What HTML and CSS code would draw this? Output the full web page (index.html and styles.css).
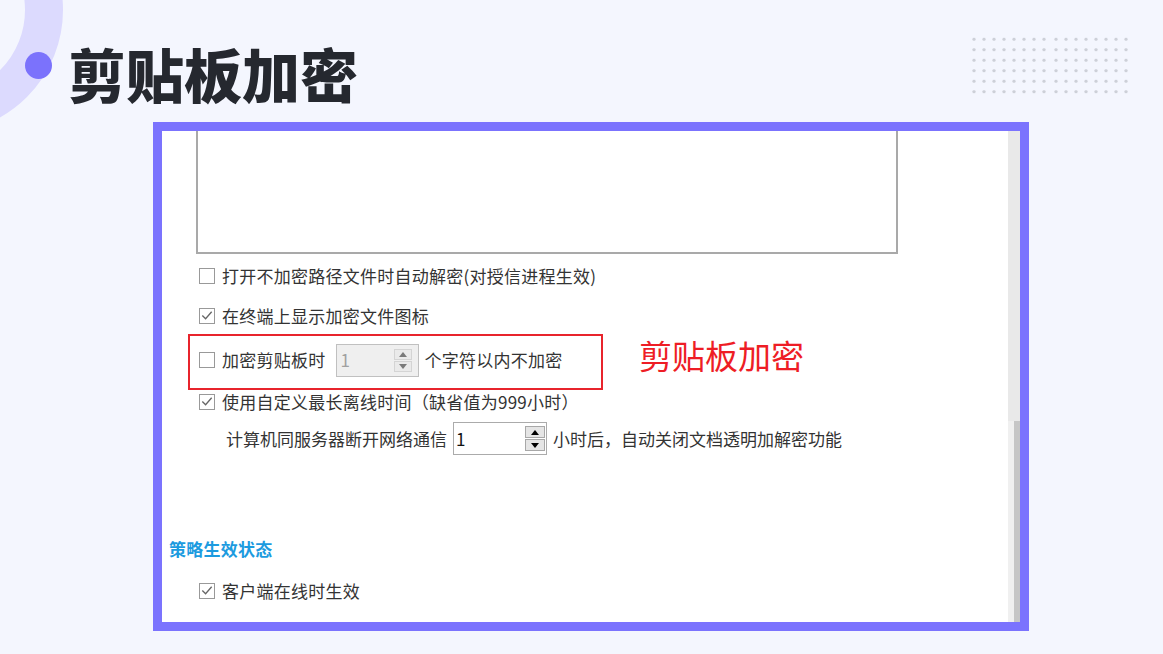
FILE: index.html
```html
<!DOCTYPE html>
<html lang="zh-CN">
<head>
    <meta charset="UTF-8">
    <meta name="viewport" content="width=device-width, initial-scale=1.0">
    <title>剪贴板加密</title>
    <link rel="stylesheet" href="styles.css">
</head>
<body>

<div class="slide">
    <div class="ring"></div>

    <header class="top">
        <div class="title-group">
            <span class="dot"></span>
            <h1>剪贴板加密</h1>
        </div>
        <div class="dots">
            <div class="dot-grid"></div>
            <div class="dot-grid"></div>
        </div>
    </header>

    <!-- screenshot of the policy dialog -->
    <div class="shot">
        <div class="shot-body">
            <div class="list-box"></div>

            <div class="row r1">
                <span class="cb"></span>
                <span>打开不加密路径文件时自动解密(对授信进程生效)</span>
            </div>

            <div class="row r2">
                <span class="cb"><svg viewBox="0 0 15 15"><path d="M2.5 7 L6 10.5 L12.5 3"/></svg></span>
                <span>在终端上显示加密文件图标</span>
            </div>

            <div class="hl-row">
                <div class="highlight">
                    <span class="cb"></span>
                    <span>加密剪贴板时</span>
                    <div class="spin off">
                        <span class="spin-val">1</span>
                        <div class="spin-btns"><span class="up"></span><span class="down"></span></div>
                    </div>
                    <span>个字符以内不加密</span>
                </div>
                <div class="note">剪贴板加密</div>
            </div>

            <div class="row r4">
                <span class="cb"><svg viewBox="0 0 15 15"><path d="M2.5 7 L6 10.5 L12.5 3"/></svg></span>
                <span>使用自定义最长离线时间（缺省值为999小时）</span>
            </div>

            <div class="row r5">
                <span>计算机同服务器断开网络通信</span>
                <div class="spin on">
                    <span class="spin-val">1</span>
                    <div class="spin-btns"><span class="up"></span><span class="down"></span></div>
                </div>
                <span>小时后，自动关闭文档透明加解密功能</span>
            </div>

            <div class="section">策略生效状态</div>

            <div class="row r6">
                <span class="cb"><svg viewBox="0 0 15 15"><path d="M2.5 7 L6 10.5 L12.5 3"/></svg></span>
                <span>客户端在线时生效</span>
            </div>
        </div>

        <div class="scrollbar">
            <div class="sb-top"></div>
            <div class="sb-rest"><div class="sb-track"></div><div class="sb-thumb"></div></div>
        </div>
    </div>
</div>

</body>
</html>
```

FILE: styles.css
```css
body {
    margin: 0;
    background: #F4F6FE;
    font-family: "Noto Sans CJK SC", "Noto Sans", sans-serif;
}
.slide {
    position: relative;
    width: 1163px;
    height: 654px;
    overflow: hidden;
}
/* big lavender ring in the corner */
.ring {
    position: absolute;
    left: -183px;
    top: -113px;
    width: 246px;
    height: 246px;
    box-sizing: border-box;
    border: 38px solid #DCDAFE;
    border-radius: 50%;
}
.top {
    position: relative;
    display: flex;
    height: 122px;
    padding: 0 32px 0 25px;
    box-sizing: border-box;
}
.title-group {
    display: flex;
    align-items: flex-start;
    gap: 16px;
    padding-top: 44px;
}
.dot {
    width: 27px;
    height: 27px;
    border-radius: 50%;
    background: #7B72FC;
    margin-top: 8px;
}
h1 {
    margin: 0;
    font-size: 58px;
    line-height: 58px;
    font-weight: 900;
    color: #25282F;
}
.dots {
    margin-left: auto;
    margin-top: 34px;
    display: flex;
    gap: 2px;
}
.dot-grid {
    width: 80px;
    height: 63px;
    background-image: radial-gradient(circle, #CDD0D8 1.4px, transparent 1.9px);
    background-size: 10px 10.5px;
}

/* the framed screenshot */
.shot {
    margin-left: 153px;
    width: 876px;
    height: 509px;
    box-sizing: border-box;
    border: 9px solid #7B73FE;
    background: #fff;
    display: flex;
}
.shot-body {
    flex: 1;
    font-size: 17px;
    letter-spacing: 0.25px;
    color: #333;
}
.list-box {
    margin-left: 34px;
    width: 702px;
    height: 123px;
    box-sizing: border-box;
    border: 2px solid #A9A9A9;
    border-top: none;
}
.row {
    display: flex;
    align-items: center;
    gap: 7px;
    padding-left: 37px;
    height: 24px;
    line-height: 24px;
}
.r1 {
    margin-top: 10px;
}
.r2 {
    margin-top: 16px;
}
.r5 {
    padding-left: 64px;
    height: 33px;
    gap: 6px;
    margin-top: 8px;
    letter-spacing: 0;
}
.r6 {
    margin-top: 18px;
}
.cb {
    flex: none;
    width: 16px;
    height: 16px;
    box-sizing: border-box;
    border: 1px solid #999;
    background: #fff;
    display: flex;
}
.cb svg {
    width: 14px;
    height: 14px;
}
.cb path {
    fill: none;
    stroke: #666;
    stroke-width: 1.4;
}
.hl-row {
    display: flex;
    align-items: center;
    margin-top: 6px;
}
.highlight {
    margin-left: 26px;
    width: 415px;
    height: 56px;
    box-sizing: border-box;
    border: 2px solid #E8242C;
    display: flex;
    align-items: center;
    gap: 7px;
    padding: 0 0 4px 9px;
    line-height: 24px;
}
.highlight .spin {
    margin-left: 3px;
    margin-right: -1px;
}
.note {
    margin-left: 36px;
    margin-top: -14px;
    font-size: 33px;
    line-height: 40px;
    letter-spacing: 0;
    color: #EE1D25;
}

/* spin boxes */
.spin {
    flex: none;
    display: flex;
    align-items: center;
    justify-content: space-between;
    box-sizing: border-box;
    height: 33px;
    border: 1px solid #ABABAB;
    background: #fff;
    padding: 0 1px 0 2px;
    color: #111;
}
.spin.on {
    width: 94px;
}
.spin.off {
    width: 83px;
    background: #EFEFEF;
    border-color: #C0C0C0;
    padding: 0 6px 0 4px;
    color: #A0A0A0;
}
.spin-btns {
    display: flex;
    flex-direction: column;
    gap: 1px;
}
.spin-btns span {
    width: 20px;
    height: 12px;
    box-sizing: border-box;
    border: 1px solid #A8A8A8;
    background: #E5E5E5;
    display: flex;
    align-items: center;
    justify-content: center;
}
.spin.off .spin-btns span {
    width: 18px;
    height: 11px;
    border-color: #D4D4D4;
    background: #EAEAEA;
}
.up::after,
.down::after {
    content: "";
    border-left: 4px solid transparent;
    border-right: 4px solid transparent;
}
.up::after {
    border-bottom: 5px solid #000;
}
.down::after {
    border-top: 5px solid #000;
}
.spin.off .up::after {
    border-bottom-color: #7A7A7A;
}
.spin.off .down::after {
    border-top-color: #7A7A7A;
}
.section {
    margin-top: 82px;
    padding-left: 7px;
    height: 24px;
    line-height: 24px;
    color: #1C9BDF;
    font-weight: 600;
}

/* scrollbar */
.scrollbar {
    width: 12px;
    display: flex;
    flex-direction: column;
}
.sb-top {
    height: 290px;
    background: #E9E9E9;
}
.sb-rest {
    flex: 1;
    display: flex;
}
.sb-track {
    flex: 1;
    background: #F0F0F0;
}
.sb-thumb {
    width: 6px;
    background: #C6C6C6;
}
```
